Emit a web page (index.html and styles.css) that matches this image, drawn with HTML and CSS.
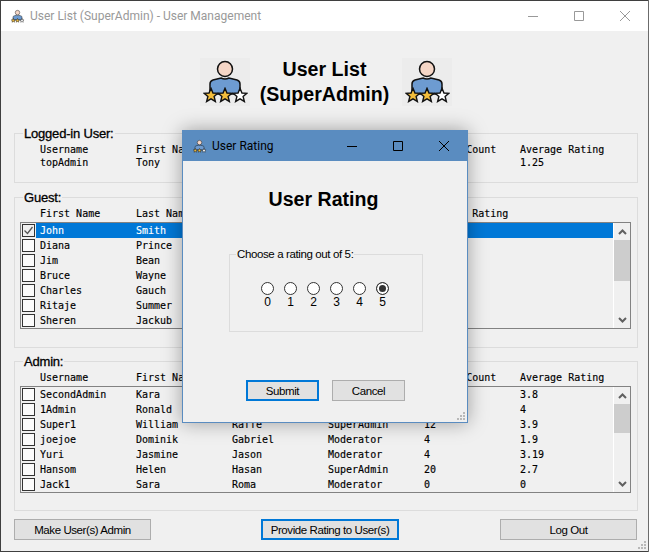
FILE: index.html
```html
<!DOCTYPE html>
<html lang="en">
<head>
    <meta charset="UTF-8">
    <meta name="viewport" content="width=device-width, initial-scale=1.0">
    <title>User List (SuperAdmin) - User Management</title>
    <link rel="stylesheet" href="styles.css">
</head>
<body>
    <svg class="defs" width="0" height="0">
        <symbol id="star-icon" viewBox="0 0 18 18">
            <path d="M9 1.5l2.2 5.2 5.6.4-4.3 3.6 1.4 5.5L9 13.3l-4.9 2.9 1.4-5.5-4.3-3.6 5.6-.4z" stroke="#111" stroke-width="1.6" stroke-linejoin="miter"/>
        </symbol>
        <symbol id="user-icon" viewBox="0 0 50 48">
            <circle cx="25" cy="11" r="7.5" fill="#f5d6c6" stroke="#111" stroke-width="1.5"/>
            <path d="M10 36v-10q0-3 3-4l8-2q4 2 8 0l8 2q3 1 3 4v10z" fill="#6d9bd1" stroke="#111" stroke-width="1.5"/>
            <use href="#star-icon" x="3" y="29" width="16" height="16" fill="#f2bd3c"/>
            <use href="#star-icon" x="17" y="29" width="16" height="16" fill="#f2bd3c"/>
            <use href="#star-icon" x="32" y="29" width="16" height="16" fill="#fff"/>
        </symbol>
        <symbol id="chevron-up" viewBox="0 0 9 6">
            <path d="M1 5l3.5-3.5L8 5" fill="none" stroke="#606060" stroke-width="2"/>
        </symbol>
        <symbol id="chevron-down" viewBox="0 0 9 6">
            <path d="M1 1l3.5 3.5L8 1" fill="none" stroke="#606060" stroke-width="2"/>
        </symbol>
        <symbol id="grip" viewBox="0 0 10 10">
            <path d="M7 1h2v2H7zM4 4h2v2H4zM7 4h2v2H7zM1 7h2v2H1zM4 7h2v2H4zM7 7h2v2H7z" fill="#b8b8b8"/>
        </symbol>
    </svg>

    <div class="window">
        <div class="titlebar">
            <svg class="titlebar-icon"><use href="#user-icon"/></svg>
            <span class="titlebar-text">User List (SuperAdmin) - User Management</span>
            <div class="window-controls">
                <svg viewBox="0 0 46 30"><path d="M18 15.5h10" stroke="currentColor"/></svg>
                <svg viewBox="0 0 46 30"><path d="M18.5 10.5h9v9h-9z" fill="none" stroke="currentColor"/></svg>
                <svg viewBox="0 0 46 30"><path d="M18 10l10 10M28 10L18 20" stroke="currentColor"/></svg>
            </div>
        </div>

        <div class="content">
            <header class="page-header">
                <svg class="page-icon"><use href="#user-icon"/></svg>
                <h1>User List (SuperAdmin)</h1>
                <svg class="page-icon"><use href="#user-icon"/></svg>
            </header>

            <fieldset class="group group-login">
                <legend>Logged-in User:</legend>
                <div class="cols"><span>Username</span><span>First Name</span><span></span><span></span><span>Rating Count</span><span>Average Rating</span></div>
                <div class="cols"><span>topAdmin</span><span>Tony</span><span></span><span></span><span></span><span>1.25</span></div>
            </fieldset>

            <fieldset class="group group-guest">
                <legend>Guest:</legend>
                <div class="cols cols-head"><span>First Name</span><span>Last Name</span><span></span><span></span><span>Average Rating</span><span></span></div>
                <div class="listbox">
                    <div class="rows">
                        <label class="row selected"><input type="checkbox" checked><span class="cols"><span>John</span><span>Smith</span></span></label>
                        <label class="row"><input type="checkbox"><span class="cols"><span>Diana</span><span>Prince</span></span></label>
                        <label class="row"><input type="checkbox"><span class="cols"><span>Jim</span><span>Bean</span></span></label>
                        <label class="row"><input type="checkbox"><span class="cols"><span>Bruce</span><span>Wayne</span></span></label>
                        <label class="row"><input type="checkbox"><span class="cols"><span>Charles</span><span>Gauch</span></span></label>
                        <label class="row"><input type="checkbox"><span class="cols"><span>Ritaje</span><span>Summer</span></span></label>
                        <label class="row"><input type="checkbox"><span class="cols"><span>Sheren</span><span>Jackub</span></span></label>
                    </div>
                    <div class="scrollbar">
                        <svg class="chevron"><use href="#chevron-up"/></svg>
                        <div class="track"><div class="thumb thumb-guest"></div></div>
                        <svg class="chevron"><use href="#chevron-down"/></svg>
                    </div>
                </div>
            </fieldset>

            <fieldset class="group group-admin">
                <legend>Admin:</legend>
                <div class="cols cols-head"><span>Username</span><span>First Name</span><span></span><span></span><span>Rating Count</span><span>Average Rating</span></div>
                <div class="listbox">
                    <div class="rows">
                        <label class="row"><input type="checkbox"><span class="cols"><span>SecondAdmin</span><span>Kara</span><span></span><span></span><span></span><span>3.8</span></span></label>
                        <label class="row"><input type="checkbox"><span class="cols"><span>1Admin</span><span>Ronald</span><span></span><span></span><span></span><span>4</span></span></label>
                        <label class="row"><input type="checkbox"><span class="cols"><span>Super1</span><span>William</span><span>Raffe</span><span>SuperAdmin</span><span>12</span><span>3.9</span></span></label>
                        <label class="row"><input type="checkbox"><span class="cols"><span>joejoe</span><span>Dominik</span><span>Gabriel</span><span>Moderator</span><span>4</span><span>1.9</span></span></label>
                        <label class="row"><input type="checkbox"><span class="cols"><span>Yuri</span><span>Jasmine</span><span>Jason</span><span>Moderator</span><span>4</span><span>3.19</span></span></label>
                        <label class="row"><input type="checkbox"><span class="cols"><span>Hansom</span><span>Helen</span><span>Hasan</span><span>SuperAdmin</span><span>20</span><span>2.7</span></span></label>
                        <label class="row"><input type="checkbox"><span class="cols"><span>Jack1</span><span>Sara</span><span>Roma</span><span>Moderator</span><span>0</span><span>0</span></span></label>
                    </div>
                    <div class="scrollbar">
                        <svg class="chevron"><use href="#chevron-up"/></svg>
                        <div class="track"><div class="thumb thumb-admin"></div></div>
                        <svg class="chevron"><use href="#chevron-down"/></svg>
                    </div>
                </div>
            </fieldset>

            <div class="actions">
                <button>Make User(s) Admin</button>
                <button class="focused action-rate">Provide Rating to User(s)</button>
                <button class="action-logout">Log Out</button>
            </div>
        </div>
        <svg class="grip grip-main"><use href="#grip"/></svg>
    </div>

    <div class="dialog">
        <div class="dialog-titlebar">
            <svg class="titlebar-icon"><use href="#user-icon"/></svg>
            <span class="dialog-title">User Rating</span>
            <div class="window-controls dialog-controls">
                <svg viewBox="0 0 46 30"><path d="M18 15.5h10" stroke="currentColor"/></svg>
                <svg viewBox="0 0 46 30"><path d="M18.5 10.5h9v9h-9z" fill="none" stroke="currentColor"/></svg>
                <svg viewBox="0 0 46 30"><path d="M18 10l10 10M28 10L18 20" stroke="currentColor"/></svg>
            </div>
        </div>
        <h2>User Rating</h2>
        <fieldset class="rating-group">
            <legend>Choose a rating out of 5:</legend>
            <div class="rating-options">
                <label><input type="radio" name="rating"><span>0</span></label>
                <label><input type="radio" name="rating"><span>1</span></label>
                <label><input type="radio" name="rating"><span>2</span></label>
                <label><input type="radio" name="rating"><span>3</span></label>
                <label><input type="radio" name="rating"><span>4</span></label>
                <label><input type="radio" name="rating" checked><span>5</span></label>
            </div>
        </fieldset>
        <div class="dialog-actions">
            <button class="focused">Submit</button>
            <button>Cancel</button>
        </div>
        <svg class="grip grip-dialog"><use href="#grip"/></svg>
    </div>
</body>
</html>
```

FILE: styles.css
```css
html, body {
    height: 100%;
}

body {
    margin: 0;
    background-color: #6b6b6b;
    font-family: "Liberation Sans", Arial, sans-serif;
    color: #000;
    overflow: hidden;
}

.defs {
    position: absolute;
}

.window {
    position: relative;
    box-sizing: border-box;
    width: 648px;
    height: 552px;
    background-color: #f0f0f0;
    border: 1px solid #3f3f3f;
    border-right: none;
}

.titlebar {
    display: flex;
    align-items: center;
    height: 30px;
    padding-left: 9px;
    background-color: #fff;
}

.titlebar-icon {
    width: 15px;
    height: 15px;
    flex: none;
}

.titlebar-text {
    margin-left: 5px;
    font-family: Roboto, sans-serif;
    font-size: 12px;
    color: #999;
}

.window-controls {
    display: flex;
    margin-left: auto;
    color: #999;
}

.window-controls svg {
    width: 46px;
    height: 30px;
}

.content {
    padding: 0 10px 0 13px;
}

.page-header {
    display: grid;
    grid-template-columns: 50px 152px 50px;
    height: 95px;
    padding-left: 186px;
}

.page-icon {
    width: 50px;
    height: 48px;
    margin-top: 27px;
    background-color: #ececec;
}

h1 {
    margin: 26px 0 0;
    padding-right: 3px;
    font-size: 19.6px;
    line-height: 25px;
    text-align: center;
}

.group {
    margin: 0 0 6px;
    padding: 2px 0 18px 25px;
    border: 1px solid #dcdcdc;
    min-width: 0;
}

.group legend {
    margin-left: -17px;
    padding: 0 1px;
    font-size: 13px;
    line-height: 15px;
    letter-spacing: -0.2px;
    -webkit-text-stroke: 0.3px #000;
}

.group-login {
    margin-bottom: 7px;
    padding-bottom: 13px;
}

.group-admin {
    padding-bottom: 17px;
}

.cols {
    display: grid;
    grid-template-columns: repeat(6, 96px);
    font-family: "DejaVu Sans Mono", monospace;
    font-size: 10px;
    line-height: 13px;
    white-space: pre;
    -webkit-text-stroke: 0.15px;
}

.cols-head {
    margin-bottom: 2px;
}

.listbox {
    display: flex;
    box-sizing: border-box;
    height: 107px;
    margin-left: -20px;
    margin-right: 6px;
    border: 1px solid #828282;
    background-color: #f0f0f0;
}

.rows {
    flex: 1;
    overflow: hidden;
}

.row {
    display: flex;
    align-items: center;
    height: 15px;
}

.row input {
    appearance: none;
    box-sizing: border-box;
    flex: none;
    width: 13px;
    height: 13px;
    margin: 0 1px 0 1px;
    border: 1px solid #333;
    background-color: #fbfbfb;
}

.row input:checked {
    background: #f0f0f0 no-repeat center / 11px 11px url("data:image/svg+xml,%3Csvg xmlns='http://www.w3.org/2000/svg' viewBox='0 0 11 11'%3E%3Cpath d='M1.5 5.5l3 3 5-6.5' fill='none' stroke='%23555' stroke-width='1.3'/%3E%3C/svg%3E");
}

.row .cols {
    flex: 1;
    height: 15px;
    padding-left: 4px;
    line-height: 15px;
}

.selected .cols {
    background-color: #0078d7;
    color: #fff;
}

.scrollbar {
    display: flex;
    flex-direction: column;
    align-items: center;
    width: 16px;
    border-left: 1px solid #fff;
}

.chevron {
    flex: none;
    width: 9px;
    height: 6px;
    margin: 6px 0 5px;
}

.track {
    flex: 1;
    width: 100%;
}

.thumb {
    background-color: #cdcdcd;
}

.thumb-guest {
    height: 41px;
}

.thumb-admin {
    height: 29px;
}

.actions {
    display: flex;
    width: 623px;
    margin-top: 8px;
}

button {
    box-sizing: border-box;
    width: 137px;
    height: 21px;
    padding: 0;
    background-color: #e1e1e1;
    border: 1px solid #adadad;
    font-family: "Liberation Sans", Arial, sans-serif;
    font-size: 11.5px;
    letter-spacing: -0.42px;
    color: #000;
    white-space: nowrap;
}

button.focused {
    border: 2px solid #0078d7;
}

.action-rate {
    width: 138px;
    margin-left: 110px;
}

.action-logout {
    margin-left: auto;
}

.grip {
    position: absolute;
    width: 10px;
    height: 10px;
}

.grip-main {
    right: 1px;
    bottom: 1px;
}

.grip-dialog {
    right: 1px;
    bottom: 1px;
}

.dialog {
    position: absolute;
    left: 182px;
    top: 130px;
    box-sizing: border-box;
    width: 286px;
    height: 293px;
    background-color: #f0f0f0;
    border: 1px solid #5a8cc0;
    box-shadow: 0 0 18px rgba(0, 0, 0, 0.35);
}

.dialog-titlebar {
    display: flex;
    align-items: center;
    height: 30px;
    padding-left: 9px;
    background-color: #5a8cc0;
}

.dialog-title {
    margin-left: 5px;
    font-family: Roboto, sans-serif;
    font-size: 12px;
}

.dialog-controls {
    color: #000;
}

h2 {
    margin: 26px 0 0;
    padding-right: 3px;
    font-size: 19.6px;
    line-height: 25px;
    text-align: center;
}

.rating-group {
    box-sizing: border-box;
    width: 194px;
    height: 85px;
    margin: 35px 0 0 46px;
    padding: 0;
    border: 1px solid #dcdcdc;
}

.rating-group legend {
    margin-left: 6px;
    padding: 0 1px;
    font-size: 11.5px;
    line-height: 15px;
    letter-spacing: -0.38px;
}

.rating-options {
    display: flex;
    gap: 10px;
    margin: 20px 0 0 31px;
}

.rating-options label {
    display: flex;
    flex-direction: column;
    align-items: center;
    width: 13px;
    font-size: 12px;
    line-height: 13px;
}

.rating-options input {
    appearance: none;
    box-sizing: border-box;
    width: 13px;
    height: 13px;
    margin: 0 0 1px;
    border: 1px solid #333;
    border-radius: 50%;
    background-color: #fff;
}

.rating-options input:checked {
    background-color: #333;
    box-shadow: inset 0 0 0 2px #fff;
}

.dialog-actions {
    display: flex;
    gap: 13px;
    margin: 48px 0 0 63px;
}

.dialog-actions button {
    width: 73px;
}
```
